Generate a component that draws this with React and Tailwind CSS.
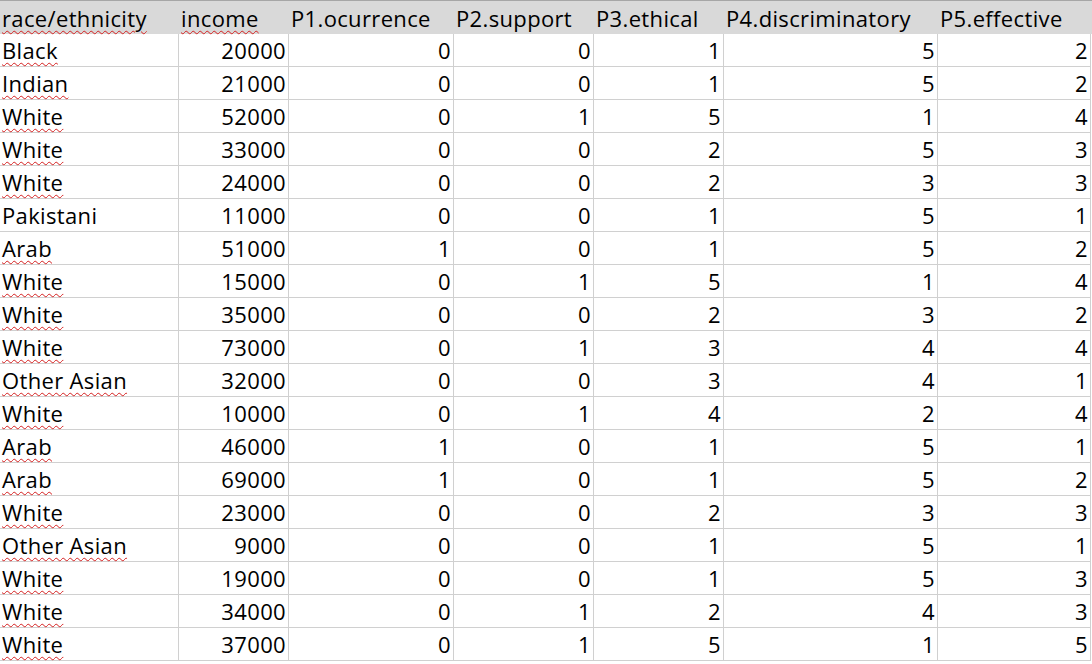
import React from "react";

const cols = ["w-[179px]", "w-[110px]", "w-[165px]", "w-[140px]", "w-[130px]", "w-[214px]", "w-[153px]"];
const headers = ["race/ethnicity", "income", "P1.ocurrence", "P2.support", "P3.ethical", "P4.discriminatory", "P5.effective"];
const squiggleHeaders = [true, true, false, false, false, false, false];

const rows = [
  ["Black", 20000, 0, 0, 1, 5, 2],
  ["Indian", 21000, 0, 0, 1, 5, 2],
  ["White", 52000, 0, 1, 5, 1, 4],
  ["White", 33000, 0, 0, 2, 5, 3],
  ["White", 24000, 0, 0, 2, 3, 3],
  ["Pakistani", 11000, 0, 0, 1, 5, 1],
  ["Arab", 51000, 1, 0, 1, 5, 2],
  ["White", 15000, 0, 1, 5, 1, 4],
  ["White", 35000, 0, 0, 2, 3, 2],
  ["White", 73000, 0, 1, 3, 4, 4],
  ["Other Asian", 32000, 0, 0, 3, 4, 1],
  ["White", 10000, 0, 1, 4, 2, 4],
  ["Arab", 46000, 1, 0, 1, 5, 1],
  ["Arab", 69000, 1, 0, 1, 5, 2],
  ["White", 23000, 0, 0, 2, 3, 3],
  ["Other Asian", 9000, 0, 0, 1, 5, 1],
  ["White", 19000, 0, 0, 1, 5, 3],
  ["White", 34000, 0, 1, 2, 4, 3],
  ["White", 37000, 0, 1, 5, 1, 5],
];

const squiggle = "underline decoration-wavy decoration-[#d42020] decoration-1 underline-offset-[3px]";

export default function App() {
  return (
    <div
      className="w-[1092px] h-[664px] bg-white overflow-hidden text-black text-[22px] tracking-[0.35px] leading-none"
      style={{ fontFamily: "'Open Sans', Lato, sans-serif" }}
    >
      <div className="flex h-[34px] border-t border-[#a6a6a6] bg-[#d9d9d9]">
        {headers.map((h, i) => (
          <div key={i} className={`${cols[i]} shrink-0 flex items-end pb-[5px] pl-[2px]`}>
            <span className={squiggleHeaders[i] ? squiggle : ""}>{h}</span>
          </div>
        ))}
      </div>
      {rows.map((r, ri) => (
        <div key={ri} className="flex h-[33px]">
          {r.map((v, ci) => (
            <div
              key={ci}
              className={`${cols[ci]} shrink-0 flex items-end pb-[5px] border-r border-b border-[#d0d0d0] ${
                ci === 0 ? "justify-start pl-[2px]" : "justify-end pr-[2px]"
              }`}
            >
              {ci === 0 ? (
                <span className={v === "Pakistani" ? "" : squiggle}>{v}</span>
              ) : (
                <span>{v}</span>
              )}
            </div>
          ))}
        </div>
      ))}
    </div>
  );
}
